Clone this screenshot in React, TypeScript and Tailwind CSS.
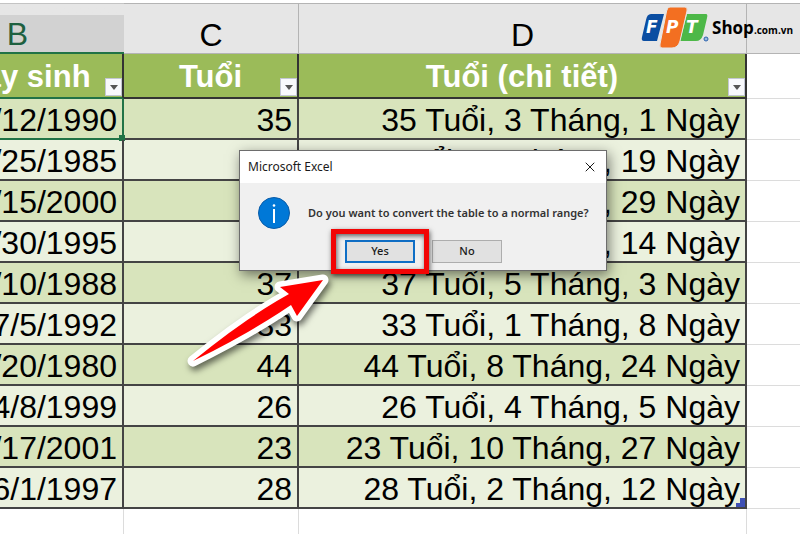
import { X } from "lucide-react";
import { useState } from "react";

type Person = { born: string; age: number; detail: string };

const PEOPLE: Person[] = [
  { born: "5/12/1990", age: 35, detail: "35 Tuổi, 3 Tháng, 1 Ngày" },
  { born: "8/25/1985", age: 39, detail: "39 Tuổi, 11 Tháng, 19 Ngày" },
  { born: "7/15/2000", age: 25, detail: "25 Tuổi, 0 Tháng, 29 Ngày" },
  { born: "1/30/1995", age: 30, detail: "30 Tuổi, 6 Tháng, 14 Ngày" },
  { born: "3/10/1988", age: 37, detail: "37 Tuổi, 5 Tháng, 3 Ngày" },
  { born: "7/5/1992", age: 33, detail: "33 Tuổi, 1 Tháng, 8 Ngày" },
  { born: "11/20/1980", age: 44, detail: "44 Tuổi, 8 Tháng, 24 Ngày" },
  { born: "4/8/1999", age: 26, detail: "26 Tuổi, 4 Tháng, 5 Ngày" },
  { born: "9/17/2001", age: 23, detail: "23 Tuổi, 10 Tháng, 27 Ngày" },
  { born: "6/1/1997", age: 28, detail: "28 Tuổi, 2 Tháng, 12 Ngày" },
];

const TITLES = ["Ngày sinh", "Tuổi", "Tuổi (chi tiết)"];

function FilterButton({ label }: { label: string }) {
  return (
    <button
      type="button"
      aria-label={`Lọc ${label}`}
      className="absolute right-0 bottom-px flex h-[18px] w-[17px] items-center justify-center border border-[#c3c7d3] bg-[#f8f9fc]"
    >
      <svg viewBox="0 0 8 5" className="h-[5px] w-2" aria-hidden>
        <path d="M0 0h8L4 5z" fill="#555" />
      </svg>
    </button>
  );
}

function Logo() {
  return (
    <div className="absolute top-[6px] right-[7px] flex items-center">
      <svg viewBox="0 0 70 44" className="h-[44px] w-[70px]" aria-label="FPT">
        <path d="M12 8H25L18 35H5Q2 35 3 31L7 14Q8 8 12 8Z" fill="#0b4ea2" />
        <path d="M48 8H67Q69 8 68 12L64 29Q62 35 57 35H41Z" fill="#4db848" />
        <path d="M31 1H46Q49 1 48 5L41 35Q39 42 33 42H23Q20 42 21 38L27 8Q28 1 31 1Z" fill="#f36f21" stroke="#e6e6e6" />
        <g fill="#fff" fontFamily="DejaVu Sans, sans-serif" fontWeight="700" fontStyle="italic" fontSize="17">
          <text x="7" y="27">F</text>
          <text x="27" y="27">P</text>
          <text x="47" y="27">T</text>
        </g>
        <circle cx="67" cy="33" r="2" fill="#9db9dd" stroke="#2b63ae" />
      </svg>
      <p className="ml-[3px] flex items-baseline font-['Open_Sans',sans-serif] font-bold text-black">
        <span className="text-[17px]">Shop</span>
        <span className="text-[10px]">.com.vn</span>
      </p>
    </div>
  );
}

function ConvertDialog({ onClose }: { onClose: () => void }) {
  return (
    <div
      role="dialog"
      aria-labelledby="dialog-title"
      className="absolute top-[150px] left-[239px] w-[368px] border border-[#6d6d6d] bg-[#f0f0f0] font-['Noto_Sans',sans-serif] text-[#1a1a1a] shadow-[2px_4px_12px_rgba(0,0,0,0.5)]"
    >
      <div className="flex h-8 items-center justify-between bg-white px-2">
        <h2 id="dialog-title" className="text-[12px]">Microsoft Excel</h2>
        <button type="button" aria-label="Close" onClick={onClose}>
          <X className="h-4 w-4" strokeWidth={1.5} />
        </button>
      </div>
      <div className="flex items-center gap-[18px] px-[18px] pt-[14px]">
        <svg viewBox="0 0 32 32" className="h-8 w-8 shrink-0" aria-hidden>
          <circle cx="16" cy="16" r="15.5" fill="#0078d7" stroke="#0a5ca8" />
          <circle cx="16" cy="8.5" r="1.3" fill="#fff" />
          <path d="M16 12v14" stroke="#fff" strokeWidth="2" />
        </svg>
        <p className="text-[11px] font-semibold whitespace-nowrap text-[#333]">
          Do you want to convert the table to a normal range?
        </p>
      </div>
      <div className="flex gap-[17px] pt-[11px] pb-[7px] pl-[105px] text-[11px] font-medium">
        <div className="relative">
          <button type="button" onClick={onClose} className="h-[23px] w-[70px] border-2 border-[#0f6fc6] bg-[#e1e1e1]">
            Yes
          </button>
          <div className="pointer-events-none absolute -inset-x-[14px] -inset-y-[11px] border-[5px] border-[#f20505] shadow-[1px_2px_5px_rgba(0,0,0,0.6),inset_1px_2px_5px_rgba(0,0,0,0.6)]" />
        </div>
        <button type="button" onClick={onClose} className="h-[23px] w-[70px] border border-[#adadad] bg-[#e1e1e1]">
          No
        </button>
      </div>
    </div>
  );
}

export default function App() {
  const [open, setOpen] = useState(true);

  return (
    <main className="relative h-screen overflow-hidden bg-white pt-[3px] font-['Liberation_Sans',Arial,sans-serif] text-black">
      <table className="-ml-[89px] w-[calc(100%+89px)] table-fixed border-separate border-spacing-0 text-[32px] leading-8">
        <colgroup>
          <col className="w-[213px]" />
          <col className="w-[175px]" />
          <col className="w-[448px]" />
          <col />
        </colgroup>
        <thead>
          <tr className="h-[51px] bg-[#e6e6e6]">
            <th className="border-t border-b-2 border-t-[#c4c4c4] border-b-[#217346] bg-linear-to-b from-[#e6e6e6] from-[11px] to-[#d2d2d2] to-[11px] pt-3 font-normal text-[#1e6040]">
              B
            </th>
            <th className="border-t border-r border-b border-[#b4b4b4] pt-3 font-normal">C</th>
            <th className="border-t border-r border-b border-[#b4b4b4] pt-3 font-normal">D</th>
            <th className="border-t border-b border-[#b4b4b4]" />
          </tr>
          <tr className="h-[45px]">
            {TITLES.map((title) => (
              <th
                key={title}
                className="relative border-r-2 border-b-2 border-[#333] bg-[#9bbb59] p-0 pt-[3px] text-[31px] font-bold text-white first:border-b-[#217346]"
              >
                {title}
                <FilterButton label={title} />
              </th>
            ))}
            <td className="border-b border-[#dcdcdc]" />
          </tr>
        </thead>
        <tbody>
          {PEOPLE.map((p, i) => (
            <tr key={p.born} className="group h-[41px] text-right odd:bg-[#d8e4bc] even:bg-[#ebf1de]">
              <td className="relative border-r-2 border-b-2 border-[#444] p-0 pt-[2px] pr-[5px] group-first:border-[#217346]">
                {p.born}
                {i === 0 && <span className="absolute -right-[3px] -bottom-[3px] h-[6px] w-[6px] bg-[#217346]" />}
              </td>
              <td className="border-r-2 border-b-2 border-[#444] p-0 pt-[2px] pr-[5px]">{p.age}</td>
              <td className="relative border-r-2 border-b-2 border-[#444] p-0 pt-[2px] pr-[5px]">
                {p.detail}
                {i === PEOPLE.length - 1 && (
                  <svg viewBox="0 0 9 9" className="absolute right-0 bottom-0 h-[9px] w-[9px]" aria-hidden>
                    <path d="M9 0v9H0V5h4V0z" fill="#3f51b5" />
                  </svg>
                )}
              </td>
              <td className="border-b border-[#dcdcdc] bg-white" />
            </tr>
          ))}
          <tr className="h-[41px]">
            <td className="border-r border-[#dcdcdc]" />
            <td className="border-r border-[#dcdcdc]" />
            <td className="border-r border-[#dcdcdc]" />
            <td />
          </tr>
        </tbody>
      </table>

      <Logo />
      {open && <ConvertDialog onClose={() => setOpen(false)} />}

      {/* pointer to the Yes button */}
      <svg
        viewBox="0 0 150 110"
        className="pointer-events-none absolute top-[268px] left-[182px] h-[110px] w-[150px] drop-shadow-[2px_4px_3px_rgba(0,0,0,0.55)]"
        aria-hidden
      >
        <path
          d="M141 12L98 19L107 26Q62 51 11 93Q68 65 109 37L115 48Z"
          fill="#f00"
          stroke="#fff"
          strokeWidth="11"
          strokeLinejoin="round"
          paintOrder="stroke"
        />
      </svg>
    </main>
  );
}
